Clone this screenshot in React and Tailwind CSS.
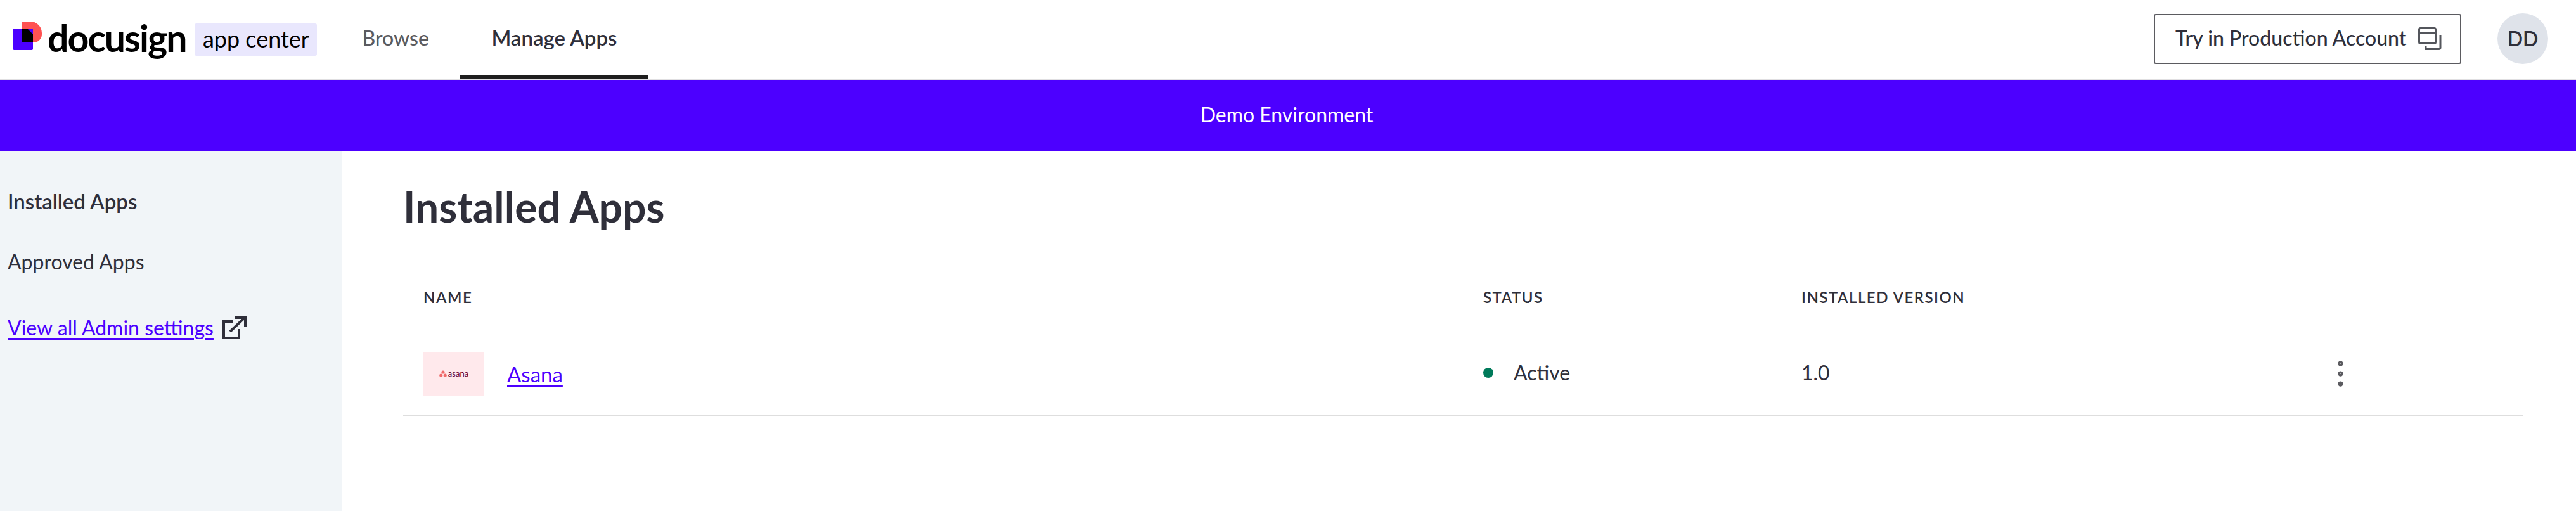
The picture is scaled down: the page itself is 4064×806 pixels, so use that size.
import React from 'react';
import { MoreVertical } from 'lucide-react';

function LogoMark() {
  return (
    <svg width="46" height="46" viewBox="0 0 46 46" className="-mt-3 shrink-0">
      <path d="M14 1h14a18 18 0 0 1 18 18v2a13 13 0 0 1-13 13h-1V17a4 4 0 0 0-4-4H14V1Z" fill="#ff5252" />
      <path d="M1 13h31v31a2 2 0 0 1-2 2H2a1 1 0 0 1-1-1V13Z" fill="#4c00ff" />
      <path d="M14 13h10l8 8v13H14V13Z" fill="#000000" />
    </svg>
  );
}

function AsanaLogo() {
  return (
    <div className="flex items-center gap-[2px]">
      <svg width="12" height="11" viewBox="0 0 12 11">
        <circle cx="6" cy="3" r="2.6" fill="#f06a6a" />
        <circle cx="2.8" cy="8" r="2.6" fill="#f06a6a" />
        <circle cx="9.2" cy="8" r="2.6" fill="#f06a6a" />
      </svg>
      <span className="text-[13px] leading-none text-[#690031]">asana</span>
    </div>
  );
}

function ProductionIcon() {
  return (
    <svg width="38" height="36" viewBox="0 0 38 36" fill="none" stroke="#54565c" strokeWidth="3" className="shrink-0">
      <rect x="1.5" y="1.5" width="26" height="24" rx="2" />
      <path d="M1.5 8.5h26" />
      <path d="M35 12v20a2.5 2.5 0 0 1-2.5 2.5H12V30" />
    </svg>
  );
}

function ExternalIcon() {
  return (
    <svg width="38" height="36" viewBox="0 0 38 36" fill="none" stroke="#2f2f3a" strokeWidth="4" className="shrink-0">
      <path d="M17 8H2v26h24V20" />
      <path d="M12 24 35 2" />
      <path d="M20 2h16v15" />
    </svg>
  );
}

export default function App() {
  return (
    <div className="min-h-[806px] bg-white font-['Lato','Liberation_Sans',sans-serif] text-[#2f2f3a]">
      <header className="flex h-[126px] items-center justify-between border-b-2 border-[#e0dfe1] bg-white">
        <div className="flex h-full items-center">
          <div className="ml-5 flex items-center">
            <LogoMark />
            <span className="-mt-[6px] ml-[9px] text-[59px] font-bold leading-none tracking-[-2px] text-black">docusign</span>
          </div>
          <div className="ml-[14px] flex h-[51px] w-[193px] items-center justify-center rounded-[3px] bg-[#e9e7fd] pb-[3px] text-[36px] text-black">
            app center
          </div>
          <nav className="ml-[26px] flex h-full">
            <a className="flex h-full w-[200px] items-center pb-[4px] pl-[45px] text-[32px] font-medium text-[#5b5b60]">Browse</a>
            <a className="flex h-full w-[296px] items-center justify-center border-b-[6px] border-[#1e1e1e] pt-[2px] text-[33px] font-semibold text-[#2f2f3a]">Manage Apps</a>
          </nav>
        </div>
        <div className="mb-[2px] mr-11 flex items-center gap-[57px]">
          <button className="flex h-[79px] w-[485px] items-center justify-between rounded-[3px] border-2 border-[#5b5b60] pl-8 pr-7 text-[32px] font-medium">
            <span className="pb-[2px]">Try in Production Account</span>
            <ProductionIcon />
          </button>
          <div className="flex h-20 w-20 items-center justify-center rounded-full bg-[#dfe3ea] text-[32px] font-semibold">DD</div>
        </div>
      </header>

      <div className="flex h-[112px] items-center justify-center bg-[#4c00ff] pb-[2px] pr-[4px] text-[32px] text-white">Demo Environment</div>

      <div className="flex min-h-[568px]">
        <aside className="flex w-[540px] shrink-0 flex-col bg-[#f1f5f8] pl-3 pt-[58px]">
          <a className="text-[33px] font-semibold leading-[42px]">Installed Apps</a>
          <a className="mt-[54px] text-[32px] leading-[42px]">Approved Apps</a>
          <div className="mt-[62px] flex items-center gap-[14px]">
            <a className="text-[32px] leading-[42px] text-[#4c00ff] underline decoration-[3px] underline-offset-4">View all Admin settings</a>
            <ExternalIcon />
          </div>
        </aside>

        <main className="flex-1 pl-24 pr-[84px] pt-[50px]">
          <h1 className="text-[66px] font-bold leading-[76px]">Installed Apps</h1>
          <div className="mt-[82px] grid h-[46px] grid-cols-[1672px_502px_1fr] items-center px-8 text-[24px] font-semibold tracking-[1.5px]">
            <span>NAME</span>
            <span>STATUS</span>
            <span>INSTALLED VERSION</span>
          </div>
          <div className="mt-[63px] grid h-[101px] grid-cols-[1672px_502px_1fr] border-b-2 border-[#dedede] px-8 text-[32px]">
            <div className="flex h-[69px] items-center">
              <div className="flex h-[69px] w-[96px] items-center justify-center bg-[#ffe9ec]">
                <AsanaLogo />
              </div>
              <a className="ml-9 mt-[2px] text-[33px] text-[#4c00ff] underline decoration-[3px] underline-offset-4">Asana</a>
            </div>
            <div className="flex h-[66px] items-center gap-8">
              <span className="h-4 w-4 rounded-full bg-[#007a5a]" />
              <span>Active</span>
            </div>
            <div className="flex h-[66px] items-center justify-between">
              <span>1.0</span>
              <MoreVertical size={55} strokeWidth={1.6} color="#5b5b60" className="mr-[228px] mt-[3px]" />
            </div>
          </div>
        </main>
      </div>
    </div>
  );
}
